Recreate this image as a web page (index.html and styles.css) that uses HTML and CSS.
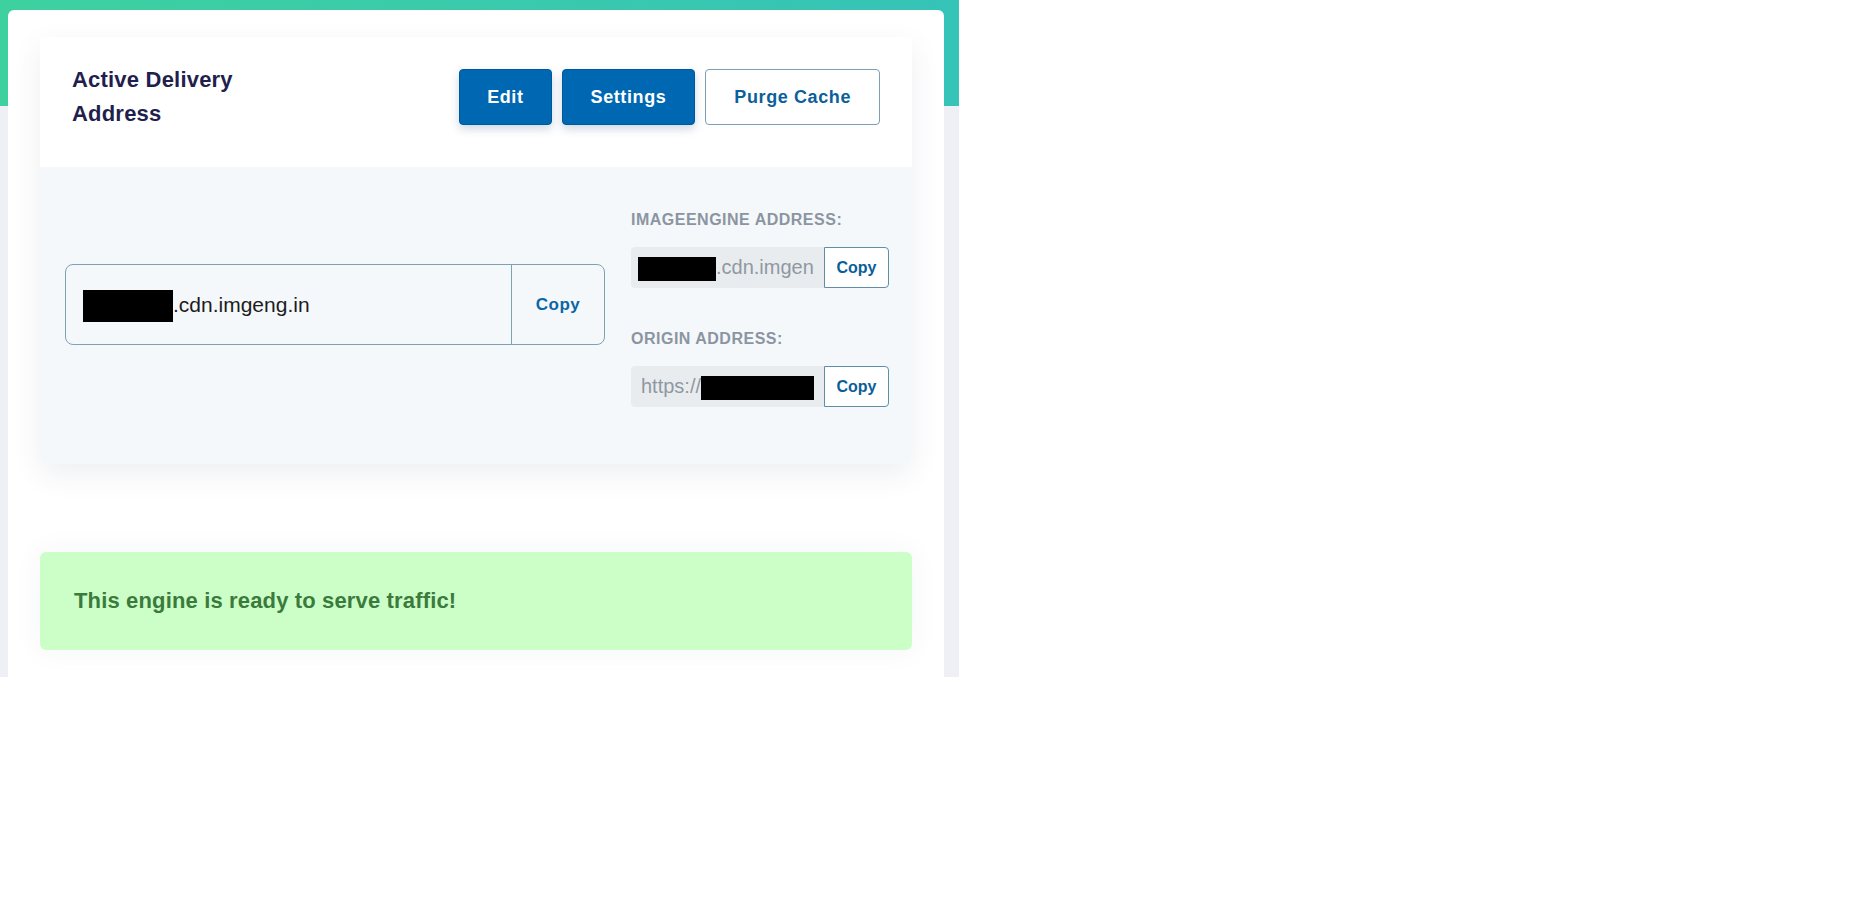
FILE: index.html
```html
<!DOCTYPE html>
<html lang="en">
<head>
    <meta charset="UTF-8">
    <meta name="viewport" content="width=device-width, initial-scale=1.0">
    <title>Engine</title>
    <link rel="stylesheet" href="styles.css">
</head>
<body>
    <div class="app">
        <main class="panel">
            <section class="delivery">
                <header class="delivery-head">
                    <h2>Active Delivery Address</h2>
                    <div class="actions">
                        <button class="btn btn-primary">Edit</button>
                        <button class="btn btn-primary">Settings</button>
                        <button class="btn btn-outline">Purge Cache</button>
                    </div>
                </header>

                <div class="delivery-body">
                    <div class="address-main">
                        <span class="address-text"><span class="redact redact-main"></span>.cdn.imgeng.in</span>
                        <button class="copy-main">Copy</button>
                    </div>

                    <div class="address-side">
                        <label>IMAGEENGINE ADDRESS:</label>
                        <div class="field">
                            <span class="field-text"><span class="redact redact-sub"></span>.cdn.imgeng.in</span>
                            <button class="copy-small">Copy</button>
                        </div>

                        <label class="label-origin">ORIGIN ADDRESS:</label>
                        <div class="field">
                            <span class="field-text">https://<span class="redact redact-origin"></span></span>
                            <button class="copy-small">Copy</button>
                        </div>
                    </div>
                </div>
            </section>

            <div class="status">This engine is ready to serve traffic!</div>
        </main>
    </div>
</body>
</html>
```

FILE: styles.css
```css
body {
    margin: 0;
    padding: 0;
    background: #ffffff;
    font-family: "Liberation Sans", Arial, sans-serif;
}
.app {
    width: 959px;
    height: 677px;
    overflow: hidden;
    background: linear-gradient(90deg, #3ed19f 0%, #36c3b8 100%) top left / 100% 106px no-repeat, #eef0f6;
    padding-top: 10px;
    box-sizing: border-box;
}
.panel {
    margin: 0 15px 0 8px;
    min-height: 700px;
    padding: 27px 32px 0;
    background: #ffffff;
    border-radius: 6px 6px 0 0;
}
.delivery {
    border-radius: 4px 4px 12px 12px;
    box-shadow: 0 10px 30px rgba(40, 50, 90, 0.08);
}
.delivery-head {
    display: flex;
    justify-content: space-between;
    align-items: center;
    padding: 26px 32px 36px;
    background: #ffffff;
    border-radius: 4px 4px 0 0;
}
.delivery-head h2 {
    margin: 0;
    max-width: 200px;
    font-size: 22px;
    line-height: 34px;
    font-weight: bold;
    letter-spacing: 0.2px;
    color: #221f4f;
}
.actions {
    display: flex;
    gap: 10px;
}
.btn {
    height: 56px;
    padding: 0 28px;
    font-family: inherit;
    font-size: 18px;
    font-weight: bold;
    letter-spacing: 0.6px;
    border-radius: 4px;
    cursor: pointer;
}
.btn-primary {
    background: #0068b2;
    border: 1px solid #00589c;
    color: #ffffff;
    box-shadow: 0 4px 10px rgba(0, 60, 110, 0.2);
}
.btn-primary:first-child {
    padding: 0 27px;
}
.btn-outline {
    background: #ffffff;
    border: 1px solid #7c9fb3;
    color: #0b5f9b;
}
.delivery-body {
    display: flex;
    gap: 26px;
    padding: 44px 23px 57px 25px;
    background: #f5f8fb;
    border-radius: 0 0 12px 12px;
}
.address-main {
    flex: 1;
    align-self: flex-start;
    margin-top: 53px;
    display: flex;
    height: 81px;
    border: 1px solid #7fa2b3;
    border-radius: 8px;
    box-sizing: border-box;
}
.address-text {
    flex: 1;
    display: flex;
    align-items: center;
    padding-left: 17px;
    font-size: 21px;
    color: #1c1c1c;
}
.copy-main {
    width: 78px;
    box-sizing: content-box;
    padding: 0 7px;
    background: none;
    border: none;
    border-left: 1px solid #7fa2b3;
    font-family: inherit;
    font-size: 17px;
    font-weight: bold;
    letter-spacing: 0.5px;
    color: #0b66a6;
}
.redact {
    display: inline-block;
    background: #000000;
}
.redact-main {
    width: 90px;
    height: 32px;
    margin-top: 3px;
}
.redact-sub {
    width: 78px;
    height: 24px;
    margin-left: -3px;
    vertical-align: middle;
}
.redact-origin {
    width: 114px;
    height: 24px;
    vertical-align: middle;
}
.address-side {
    width: 258px;
    display: flex;
    flex-direction: column;
}
.address-side label {
    display: block;
    font-size: 16px;
    line-height: 18px;
    font-weight: bold;
    letter-spacing: 0.5px;
    color: #8b95a1;
    margin-bottom: 18px;
}
.address-side .label-origin {
    margin-top: 42px;
}
.field {
    display: flex;
    height: 41px;
}
.field-text {
    flex: 1;
    min-width: 0;
    padding-left: 10px;
    border-right: 10px solid #e9ecef;
    background: #e9ecef;
    border-radius: 4px 0 0 4px;
    line-height: 41px;
    font-size: 20px;
    color: #8f98a2;
    white-space: nowrap;
    overflow: hidden;
}
.copy-small {
    width: 65px;
    flex-shrink: 0;
    background: #ffffff;
    border: 1px solid #5f8fa7;
    border-radius: 0 4px 4px 0;
    font-family: inherit;
    font-size: 16px;
    font-weight: bold;
    color: #0b5f99;
}
.status {
    margin-top: 88px;
    height: 98px;
    display: flex;
    align-items: center;
    padding-left: 34px;
    background: #ccfec8;
    border-radius: 6px;
    box-shadow: 0 0 30px rgba(40, 50, 90, 0.05);
    font-size: 22px;
    font-weight: bold;
    letter-spacing: 0.15px;
    color: #3a7b3c;
}
```
